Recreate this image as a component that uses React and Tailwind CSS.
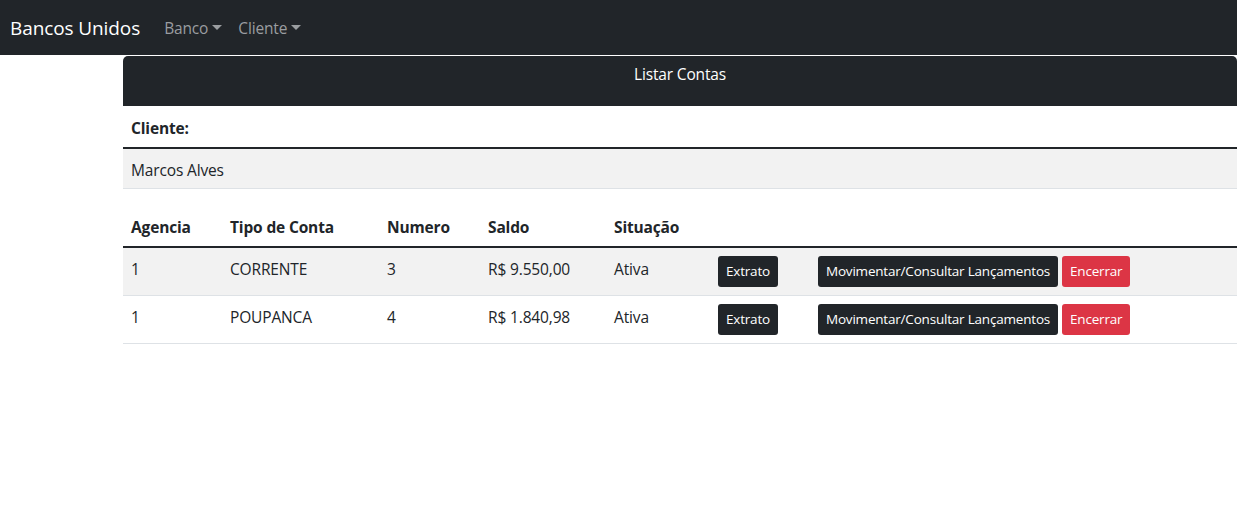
import React from "react";

const font = { fontFamily: '"Open Sans", "Noto Sans", sans-serif' };

function Caret() {
  return (
    <span className="ml-[4px] inline-block h-0 w-0 border-x-[5px] border-t-[5px] border-x-transparent border-t-current" />
  );
}

function Btn({ children, red }) {
  return (
    <button
      className={
        "inline-block h-[31px] rounded-[3px] px-[8px] text-[13.5px] leading-[21px] tracking-[-0.2px] text-white " +
        (red ? "bg-[#dc3545]" : "bg-[#212529]")
      }
    >
      {children}
    </button>
  );
}

const rows = [
  { ag: "1", tipo: "CORRENTE", num: "3", saldo: "R$ 9.550,00", sit: "Ativa", striped: true },
  { ag: "1", tipo: "POUPANCA", num: "4", saldo: "R$ 1.840,98", sit: "Ativa", striped: false },
];

const th = "h-[41px] px-[8px] pt-[10px] pb-[7px] text-left align-top font-bold";
const td = "px-[8px] pt-[9px] pb-[8px] align-top";

export default function App() {
  return (
    <div
      className="min-h-[531px] bg-white text-[15.5px] leading-[24px] tracking-[-0.15px] text-[#212529]"
      style={font}
    >
      <nav className="flex h-[55px] items-center bg-[#212529] px-[10px]">
        <span className="mr-[16px] text-[19px] leading-[30px] tracking-[-0.1px] text-white">Bancos Unidos</span>
        <div className="flex items-center text-[#9a9da0]">
          <span className="flex items-center px-[8px]">
            Banco
            <Caret />
          </span>
          <span className="flex items-center px-[8px]">
            Cliente
            <Caret />
          </span>
        </div>
      </nav>
      <div className="ml-[123px] mt-[1px]">
        <div className="h-[50px] rounded-t-[5px] bg-[#212529] pt-[6px] text-center text-white">
          Listar Contas
        </div>
        <table className="mb-[16px] w-full border-collapse">
          <thead>
            <tr className="border-b-2 border-[#212529]">
              <th className={th}>Cliente:</th>
            </tr>
          </thead>
          <tbody>
            <tr className="h-[40px] border-b border-[#dee2e6] bg-[#f2f2f2]">
              <td className="px-[8px] pt-[9px] pb-[6px] align-top">Marcos Alves</td>
            </tr>
          </tbody>
        </table>
        <table className="w-full table-fixed border-collapse">
          <colgroup>
            <col className="w-[99px]" />
            <col className="w-[157px]" />
            <col className="w-[101px]" />
            <col className="w-[126px]" />
            <col className="w-[104px]" />
            <col className="w-[100px]" />
            <col />
          </colgroup>
          <thead>
            <tr className="border-b-2 border-[#212529]">
              <th className={th}>Agencia</th>
              <th className={th}>Tipo de Conta</th>
              <th className={th}>Numero</th>
              <th className={th}>Saldo</th>
              <th className={th}>Situação</th>
              <th className={th}></th>
              <th className={th}></th>
            </tr>
          </thead>
          <tbody>
            {rows.map((r, i) => (
              <tr
                key={i}
                className={"h-[48px] border-b border-[#dee2e6] " + (r.striped ? "bg-[#f2f2f2]" : "")}
              >
                <td className={td}>{r.ag}</td>
                <td className={td}>{r.tipo}</td>
                <td className={td}>{r.num}</td>
                <td className={td}>{r.saldo}</td>
                <td className={td}>{r.sit}</td>
                <td className="px-[8px] pt-[8px] pb-[8px] align-top">
                  <Btn>Extrato</Btn>
                </td>
                <td className="px-[8px] pt-[8px] pb-[8px] align-top">
                  <div className="flex gap-[4px]">
                    <Btn>Movimentar/Consultar Lançamentos</Btn>
                    <Btn red>Encerrar</Btn>
                  </div>
                </td>
              </tr>
            ))}
          </tbody>
        </table>
      </div>
    </div>
  );
}
